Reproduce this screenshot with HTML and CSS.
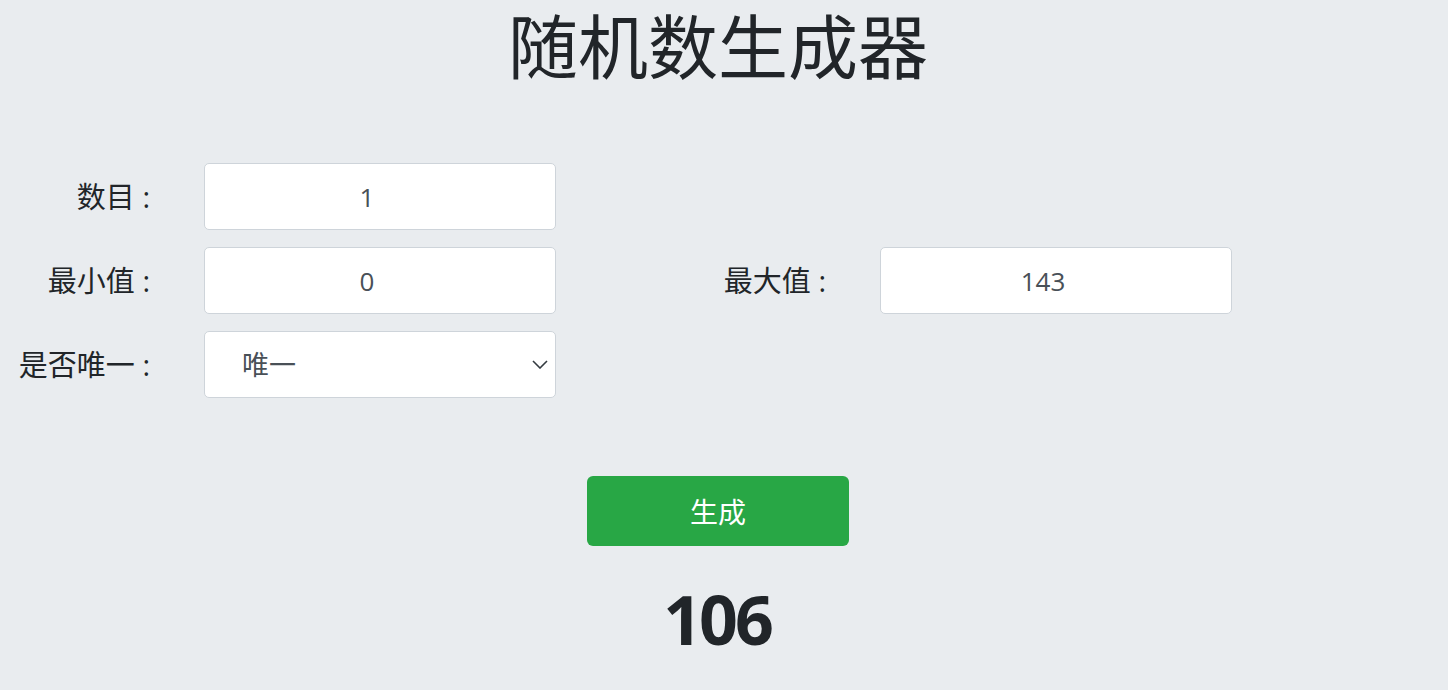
FILE: index.html
```html
<!DOCTYPE html>
<html lang="zh-CN">
<head>
  <meta charset="UTF-8" />
  <meta name="viewport" content="width=device-width, initial-scale=1" />
  <title>随机数生成器</title>
  <link rel="stylesheet" href="styles.css">
</head>
<body>
  <div class="page">
    <h1 class="title">随机数生成器</h1>

    <div class="form-grid">
      <label class="label" for="count">数目 :</label>
      <input class="field" type="text" id="count" value="1" />
      <div></div>
      <div></div>

      <label class="label" for="min">最小值 :</label>
      <input class="field" type="text" id="min" value="0" />
      <label class="label" for="max">最大值 :</label>
      <input class="field" type="text" id="max" value="143" />

      <label class="label" for="unique">是否唯一 :</label>
      <div class="select-wrap">
        <select class="field select" id="unique">
          <option>唯一</option>
          <option>可重复</option>
        </select>
        <svg class="chevron" width="16" height="9" viewBox="0 0 16 9">
          <path d="M1 1 L8 8 L15 1" fill="none" stroke="#343a40" stroke-width="1.6" />
        </svg>
      </div>
    </div>

    <div class="actions">
      <button id="generate-btn">生成</button>
    </div>

    <div class="result" id="result">106</div>
  </div>

  <script>
    const btn = document.getElementById('generate-btn');
    const result = document.getElementById('result');

    btn.addEventListener('click', () => {
      const count = parseInt(document.getElementById('count').value) || 1;
      const min = parseInt(document.getElementById('min').value) || 0;
      const max = parseInt(document.getElementById('max').value) || 0;
      const unique = document.getElementById('unique').value === '唯一';

      let nums = [];
      let guard = 0;
      while (nums.length < count && guard < 100000) {
        guard++;
        const n = Math.floor(Math.random() * (max - min + 1)) + min;
        if (unique && nums.includes(n)) continue;
        nums.push(n);
      }
      result.textContent = nums.join(', ');
    });
  </script>
</body>
</html>
```

FILE: styles.css
```css
body {
  margin: 0;
  background-color: #e9ecef;
  color: #212529;
  font-family: "Open Sans", "Noto Sans CJK SC", sans-serif;
}
.page {
  width: 1436px;
}
.title {
  margin: 0;
  padding-top: 3px;
  text-align: center;
  font-size: 70px;
  font-weight: 400;
  line-height: 88px;
}
.form-grid {
  display: grid;
  grid-template-columns: 154px 352px 224px 352px;
  column-gap: 50px;
  row-gap: 17px;
  margin-top: 72px;
}
.label {
  padding-right: 4px;
  text-align: right;
  font-size: 29px;
  line-height: 67px;
  white-space: nowrap;
}
.field {
  box-sizing: border-box;
  width: 352px;
  height: 67px;
  padding: 0 26px 0 0;
  border: 1px solid #ced4da;
  border-radius: 5px;
  background: white;
  color: #495057;
  font-family: inherit;
  font-size: 26px;
  text-align: center;
  outline: none;
}
.select-wrap {
  position: relative;
}
.select {
  appearance: none;
  -webkit-appearance: none;
  text-align: left;
  padding: 0 0 0 37px;
  font-size: 27px;
}
.chevron {
  position: absolute;
  right: 8px;
  top: 29px;
  pointer-events: none;
}
.actions {
  display: flex;
  justify-content: center;
  margin-top: 78px;
}
button {
  width: 262px;
  height: 70px;
  border: none;
  border-radius: 6px;
  background-color: #28a745;
  color: white;
  font-family: inherit;
  font-size: 28px;
  cursor: pointer;
}
button:hover {
  background-color: #218838;
}
.result {
  margin-top: 28px;
  padding-right: 2px;
  text-align: center;
  font-size: 68px;
  font-weight: 700;
  letter-spacing: -3px;
  line-height: 90px;
}
```
